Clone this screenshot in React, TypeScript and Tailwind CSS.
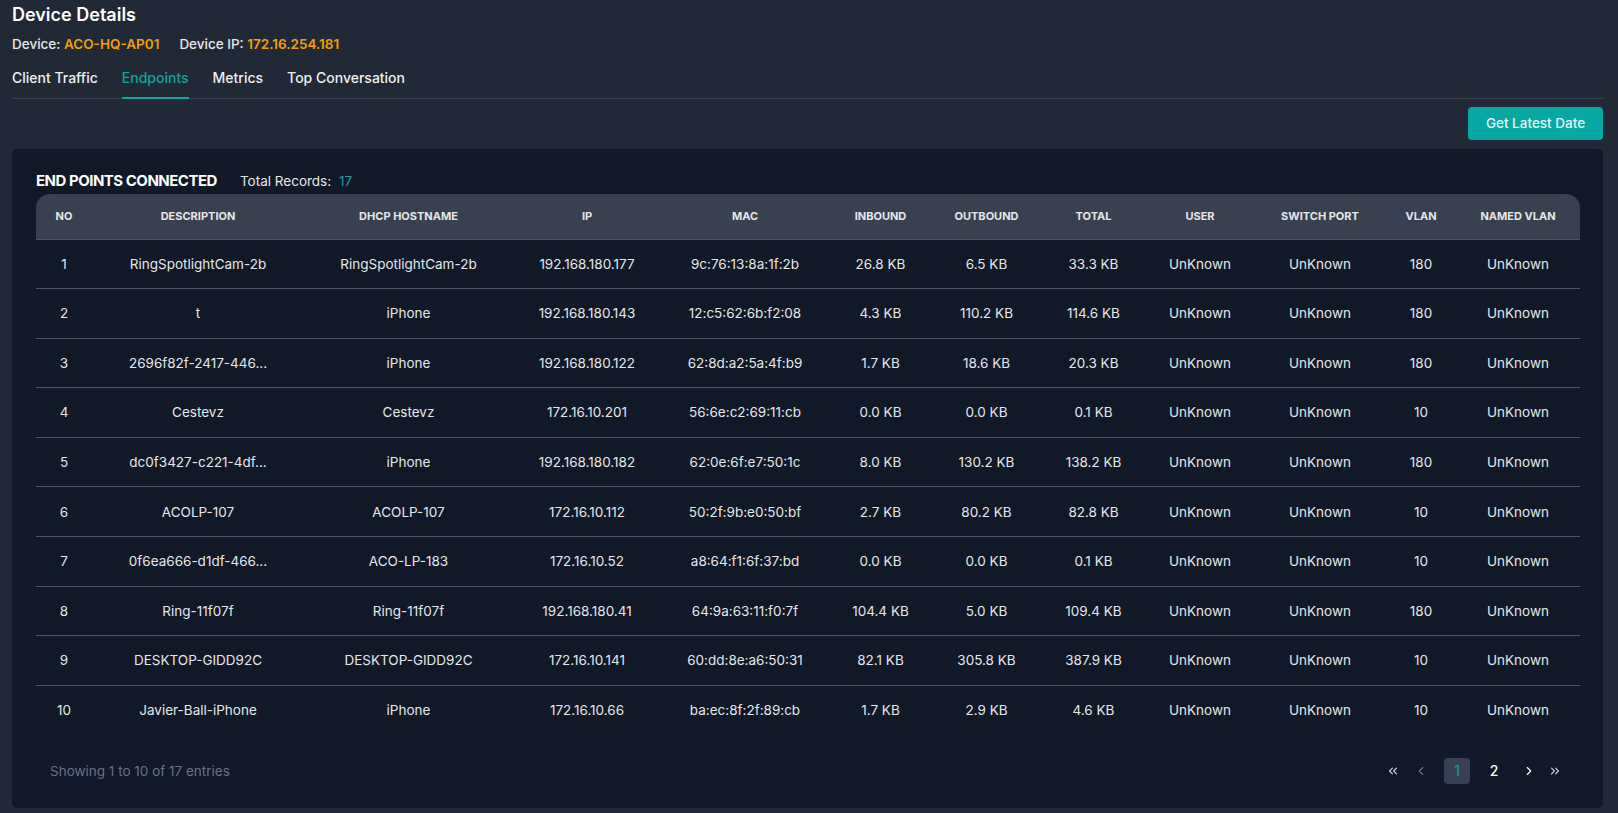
import { ChevronLeft, ChevronRight, ChevronsLeft, ChevronsRight } from 'lucide-react';

type Endpoint = {
  desc: string;
  host: string;
  ip: string;
  mac: string;
  inbound: string;
  outbound: string;
  total: string;
  vlan: string;
};

const endpoints: Endpoint[] = [
  { desc: 'RingSpotlightCam-2b', host: 'RingSpotlightCam-2b', ip: '192.168.180.177', mac: '9c:76:13:8a:1f:2b', inbound: '26.8 KB', outbound: '6.5 KB', total: '33.3 KB', vlan: '180' },
  { desc: 't', host: 'iPhone', ip: '192.168.180.143', mac: '12:c5:62:6b:f2:08', inbound: '4.3 KB', outbound: '110.2 KB', total: '114.6 KB', vlan: '180' },
  { desc: '2696f82f-2417-446...', host: 'iPhone', ip: '192.168.180.122', mac: '62:8d:a2:5a:4f:b9', inbound: '1.7 KB', outbound: '18.6 KB', total: '20.3 KB', vlan: '180' },
  { desc: 'Cestevz', host: 'Cestevz', ip: '172.16.10.201', mac: '56:6e:c2:69:11:cb', inbound: '0.0 KB', outbound: '0.0 KB', total: '0.1 KB', vlan: '10' },
  { desc: 'dc0f3427-c221-4df...', host: 'iPhone', ip: '192.168.180.182', mac: '62:0e:6f:e7:50:1c', inbound: '8.0 KB', outbound: '130.2 KB', total: '138.2 KB', vlan: '180' },
  { desc: 'ACOLP-107', host: 'ACOLP-107', ip: '172.16.10.112', mac: '50:2f:9b:e0:50:bf', inbound: '2.7 KB', outbound: '80.2 KB', total: '82.8 KB', vlan: '10' },
  { desc: '0f6ea666-d1df-466...', host: 'ACO-LP-183', ip: '172.16.10.52', mac: 'a8:64:f1:6f:37:bd', inbound: '0.0 KB', outbound: '0.0 KB', total: '0.1 KB', vlan: '10' },
  { desc: 'Ring-11f07f', host: 'Ring-11f07f', ip: '192.168.180.41', mac: '64:9a:63:11:f0:7f', inbound: '104.4 KB', outbound: '5.0 KB', total: '109.4 KB', vlan: '180' },
  { desc: 'DESKTOP-GIDD92C', host: 'DESKTOP-GIDD92C', ip: '172.16.10.141', mac: '60:dd:8e:a6:50:31', inbound: '82.1 KB', outbound: '305.8 KB', total: '387.9 KB', vlan: '10' },
  { desc: 'Javier-Ball-iPhone', host: 'iPhone', ip: '172.16.10.66', mac: 'ba:ec:8f:2f:89:cb', inbound: '1.7 KB', outbound: '2.9 KB', total: '4.6 KB', vlan: '10' },
];

const columns = [
  { label: 'No', w: 'w-[56px]' },
  { label: 'Description', w: 'w-[212px]' },
  { label: 'DHCP Hostname', w: 'w-[209px]' },
  { label: 'IP', w: 'w-[148px]' },
  { label: 'MAC', w: 'w-[168px]' },
  { label: 'Inbound', w: 'w-[103px]' },
  { label: 'Outbound', w: 'w-[109px]' },
  { label: 'Total', w: 'w-[105px]' },
  { label: 'User', w: 'w-[108px]' },
  { label: 'Switch Port', w: 'w-[132px]' },
  { label: 'VLAN', w: 'w-[70px]' },
  { label: 'Named VLAN', w: 'w-[124px]' },
];

const tabs = ['Client Traffic', 'Endpoints', 'Metrics', 'Top Conversation'];

export default function App() {
  return (
    <div className="h-[813px] overflow-hidden bg-[#212936] font-['Inter',sans-serif] text-[#e5e7eb]">
      <div className="pl-3 pr-[15px] pt-1">
        {/* Cabecera */}
        <h1 className="text-[18px] font-semibold leading-[22px] text-white">Device Details</h1>
        <div className="mt-2 flex gap-5 text-[13.5px] font-medium leading-5">
          <span>
            Device: <span className="font-semibold text-[#f59e0b]">ACO-HQ-AP01</span>
          </span>
          <span>
            Device IP: <span className="font-semibold text-[#f59e0b]">172.16.254.181</span>
          </span>
        </div>

        {/* Tabs */}
        <div className="mt-[14px] flex gap-[24px] border-b border-[#3a4250] text-[14px] font-medium leading-5">
          {tabs.map((t) => (
            <div
              key={t}
              className={`-mb-px border-b-2 pb-[9px] ${
                t === 'Endpoints' ? 'border-[#13a3a0] text-[#13a3a0]' : 'border-transparent text-[#eef0f3]'
              }`}
            >
              {t}
            </div>
          ))}
        </div>

        <div className="mt-[8px] flex justify-end">
          <button className="h-[33px] w-[135px] rounded-[4px] bg-[#07a7a4] text-[13.5px] font-medium text-[#e8f4f4]">
            Get Latest Date
          </button>
        </div>

        {/* Tabla de endpoints */}
        <div className="mt-[9px] h-[659px] rounded-[5px] bg-[#111827] px-6 pt-[22px]">
          <div className="mb-[3px] flex items-center gap-[23px] leading-5">
            <span className="text-[15px] font-bold tracking-[-0.5px] text-white">END POINTS CONNECTED</span>
            <span className="text-[13.5px] text-[#e5e7eb]">
              Total Records: <span className="ml-1 text-[#14a3a3]">17</span>
            </span>
          </div>

          <table className="w-full table-fixed border-collapse text-center">
            <colgroup>
              {columns.map((c) => (
                <col key={c.label} className={c.w} />
              ))}
            </colgroup>
            <thead>
              <tr className="h-[45px] bg-[#394150]">
                {columns.map((c, i) => (
                  <th
                    key={c.label}
                    className={`border-b border-[#4b5563] text-[11px] font-bold uppercase text-[#e5e7eb] ${
                      i === 0 ? 'rounded-tl-[14px]' : ''
                    } ${i === columns.length - 1 ? 'rounded-tr-[14px]' : ''}`}
                  >
                    {c.label}
                  </th>
                ))}
              </tr>
            </thead>
            <tbody className="text-[13.5px]">
              {endpoints.map((e, i) => (
                <tr
                  key={i}
                  className={`h-[49.6px] ${i < endpoints.length - 1 ? 'border-b border-[#4b5563]' : ''}`}
                >
                  <td>{i + 1}</td>
                  <td className="truncate">{e.desc}</td>
                  <td className="truncate">{e.host}</td>
                  <td>{e.ip}</td>
                  <td>{e.mac}</td>
                  <td>{e.inbound}</td>
                  <td>{e.outbound}</td>
                  <td>{e.total}</td>
                  <td>UnKnown</td>
                  <td>UnKnown</td>
                  <td>{e.vlan}</td>
                  <td>UnKnown</td>
                </tr>
              ))}
            </tbody>
          </table>

          <div className="mt-[23px] flex items-center justify-between pl-[14px] pr-[17px]">
            <span className="text-[13.5px] text-[#6b7280]">Showing 1 to 10 of 17 entries</span>
            <div className="flex items-center text-[14px]">
              <ChevronsLeft className="h-[14px] w-[14px] text-[#d1d5db]" strokeWidth={2} />
              <ChevronLeft className="ml-[14px] h-[14px] w-[14px] text-[#6b7280]" strokeWidth={2} />
              <span className="ml-[16px] flex h-[26px] w-[26px] items-center justify-center rounded-[4px] bg-[#374151] text-[#14a3a3]">
                1
              </span>
              <span className="ml-[18px] w-[12px] text-center font-medium text-white">2</span>
              <ChevronRight className="ml-[22px] h-[14px] w-[14px] text-white" strokeWidth={2} />
              <ChevronsRight className="ml-[12px] h-[14px] w-[14px] text-[#d1d5db]" strokeWidth={2} />
            </div>
          </div>
        </div>
      </div>
    </div>
  );
}
